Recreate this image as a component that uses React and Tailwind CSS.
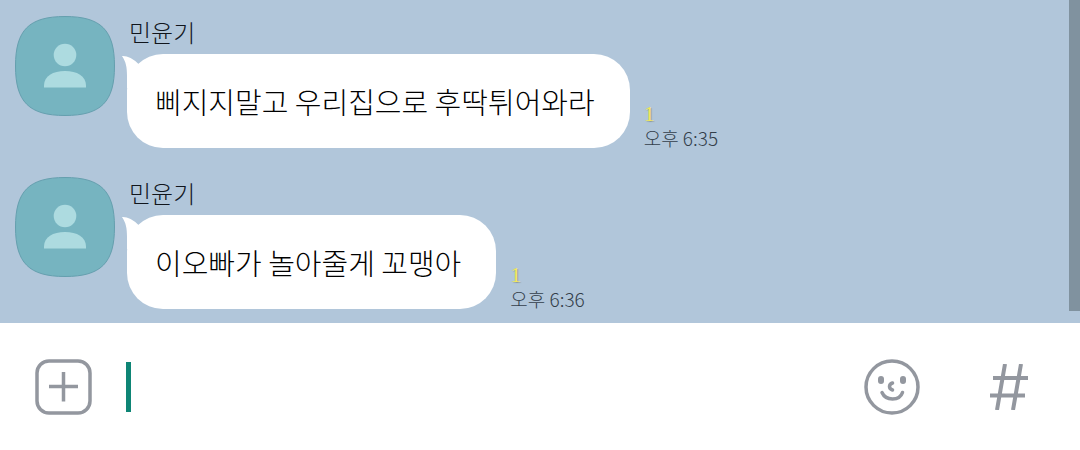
import React from "react";

const messages = [
  { id: 1, name: "민윤기", text: "삐지지말고 우리집으로 후딱튀어와라", unread: 1, time: "오후 6:35" },
  { id: 2, name: "민윤기", text: "이오빠가 놀아줄게 꼬맹아", unread: 1, time: "오후 6:36" },
];

const Avatar = () => (
  <svg viewBox="0 0 100 100" className="size-[100px] shrink-0" aria-hidden="true">
    <path
      d="M50 .5C86 .5 99.500 14 99.500 50S86 99.500 50 99.500.5 86 .5 50 14 .5 50 .5Z"
      fill="#76b4c0"
      stroke="#659fae"
    />
    <circle cx="50" cy="39" r="11.300" fill="#addbe0" />
    <path d="M29 71.500v-2C29 60 38 55 50 55s21 5 21 14.500v2Z" fill="#addbe0" />
  </svg>
);

const Message = ({ name, text, unread, time }) => (
  <li className="flex items-start gap-3">
    <Avatar />
    <div className="min-w-0">
      <div className="pl-0.5 text-2xl leading-8 font-light text-[#10151c]">{name}</div>
      <div className="mt-1.5 flex items-end gap-3.5">
        <div className="relative rounded-[36px] bg-white py-[27px] pr-[35px] pl-7 text-[29px] leading-10 font-light text-black">
          <svg
            viewBox="0 0 26 34"
            className="absolute top-0 -left-[5px] h-[34px] w-[26px]"
            fill="#fff"
            aria-hidden="true"
          >
            <path d="M0 2Q8 1.500 16.500 10L26 4V34H5V22C5 13 4 8 0 2Z" />
          </svg>
          <p className="relative">{text}</p>
        </div>
        <div className="shrink-0 text-[19px] font-light text-[#333e4a]">
          <div className="font-['Liberation_Serif',serif] text-[22px] leading-7 font-normal text-[#f2e85c] [text-shadow:1px_1px_1px_#8d9a9b]">
            {unread}
          </div>
          <time className="block leading-5">{time}</time>
        </div>
      </div>
    </div>
  </li>
);

const PlusIcon = () => (
  <svg viewBox="0 0 57 56" className="h-14 w-[57px]" fill="none" stroke="#93979f" strokeWidth="3.500" aria-hidden="true">
    <rect x="2" y="2" width="53" height="52" rx="12" />
    <path d="M28.500 13v29.500M14 27.500h29" />
  </svg>
);

const SmileIcon = () => (
  <svg viewBox="0 0 56 56" className="size-14" fill="none" stroke="#93979f" strokeWidth="3.500" aria-hidden="true">
    <circle cx="28" cy="28" r="26" />
    <g fill="#93979f" stroke="none">
      <rect x="14" y="17" width="6" height="8" rx="3" />
      <rect x="36" y="17" width="6" height="8" rx="3" />
    </g>
    <path d="M28.500 24q-3 1-3 3.500t3 3.500" strokeLinecap="round" />
    <path d="M18 33.500c2 4.500 5.500 6.500 10.500 6.500s8.500-2 10-6.500" strokeLinecap="round" />
  </svg>
);

const HashIcon = () => (
  <svg viewBox="0 0 40 46" className="h-[46px] w-10" fill="none" stroke="#93979f" strokeWidth="4" aria-hidden="true">
    <path d="M16 0 8 46M32 0l-8 46M4 14h35M1 31.500h35" />
  </svg>
);

const App = () => {
  return (
    <div className="flex min-h-screen flex-col bg-white font-['Noto_Sans_CJK_KR',sans-serif]">
      <main className="flex grow justify-between bg-[#b1c6da]">
        <ul className="flex min-w-0 flex-col gap-[29px] pt-4 pb-3.5 pl-[15px]">
          {messages.map((message) => (
            <Message key={message.id} {...message} />
          ))}
        </ul>
        <div className="mb-3 w-[11px] shrink-0 bg-[#80929f]" />
      </main>

      <form className="flex items-center bg-white pt-9 pr-[51px] pb-[35px] pl-[35px]">
        <button type="button" aria-label="추가">
          <PlusIcon />
        </button>
        <label className="ml-[34px] flex min-w-0 grow items-center">
          <span className="h-[50px] w-[5px] shrink-0 bg-[#0e8575]" />
          <input
            type="text"
            aria-label="메시지 입력"
            className="min-w-0 grow bg-transparent text-[29px] leading-10 caret-transparent outline-none"
          />
        </label>
        <button type="button" aria-label="이모티콘">
          <SmileIcon />
        </button>
        <button type="button" aria-label="샵검색" className="ml-[69px]">
          <HashIcon />
        </button>
      </form>
    </div>
  );
};

export default App;
